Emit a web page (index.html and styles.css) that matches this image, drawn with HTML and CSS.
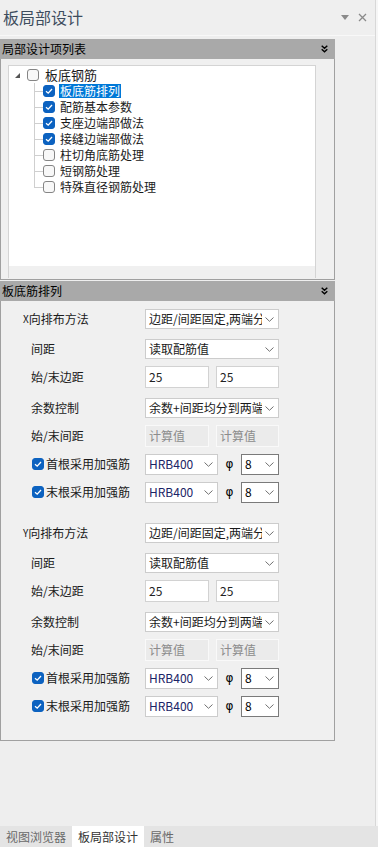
FILE: index.html
```html
<!DOCTYPE html>
<html lang="zh-CN">
<head>
  <meta charset="UTF-8">
  <title>板局部设计</title>
  <link rel="stylesheet" href="styles.css">
</head>
<body>
  <div class="frame">
    <div class="main">
      <div class="titlebar">
        <span class="title">板局部设计</span>
        <span class="title-tools">
          <svg width="8" height="5" viewBox="0 0 8 5"><path d="M0 0H8L4 5Z" fill="#8a8a8a"/></svg>
          <svg width="9" height="9" viewBox="0 0 9 9"><path d="M1 1L8 8M8 1L1 8" stroke="#8a8a8a" stroke-width="1.3"/></svg>
        </span>
      </div>

      <div class="content">
        <!-- 局部设计项列表 -->
        <div class="panel">
          <div class="panel-head">
            <span>局部设计项列表</span>
            <svg width="7" height="8" viewBox="0 0 7 8"><path d="M0.7 0.7L3.5 3.3L6.3 0.7M0.7 4.2L3.5 6.8L6.3 4.2" stroke="#000" stroke-width="1.4" fill="none"/></svg>
          </div>
          <div class="panel-body tree-body">
            <div class="tree">
              <div class="tree-list">
                <div class="node root">
                  <svg class="expander" width="5" height="5" viewBox="0 0 5 5"><path d="M5 0V5H0Z" fill="#555"/></svg>
                  <span class="cb"></span>
                  <span class="node-text">板底钢筋</span>
                </div>
                <div class="node child">
                  <span class="conn"></span>
                  <span class="cb on"><svg width="10" height="10" viewBox="0 0 10 10"><path d="M2 5.2L4.2 7.2L8 3" stroke="#fff" stroke-width="1.3" fill="none"/></svg></span>
                  <span class="node-text selected">板底筋排列</span>
                </div>
                <div class="node child">
                  <span class="conn"></span>
                  <span class="cb on"><svg width="10" height="10" viewBox="0 0 10 10"><path d="M2 5.2L4.2 7.2L8 3" stroke="#fff" stroke-width="1.3" fill="none"/></svg></span>
                  <span class="node-text">配筋基本参数</span>
                </div>
                <div class="node child">
                  <span class="conn"></span>
                  <span class="cb on"><svg width="10" height="10" viewBox="0 0 10 10"><path d="M2 5.2L4.2 7.2L8 3" stroke="#fff" stroke-width="1.3" fill="none"/></svg></span>
                  <span class="node-text">支座边端部做法</span>
                </div>
                <div class="node child">
                  <span class="conn"></span>
                  <span class="cb on"><svg width="10" height="10" viewBox="0 0 10 10"><path d="M2 5.2L4.2 7.2L8 3" stroke="#fff" stroke-width="1.3" fill="none"/></svg></span>
                  <span class="node-text">接缝边端部做法</span>
                </div>
                <div class="node child">
                  <span class="conn"></span>
                  <span class="cb"></span>
                  <span class="node-text">柱切角底筋处理</span>
                </div>
                <div class="node child">
                  <span class="conn"></span>
                  <span class="cb"></span>
                  <span class="node-text">短钢筋处理</span>
                </div>
                <div class="node child">
                  <span class="conn last"></span>
                  <span class="cb"></span>
                  <span class="node-text">特殊直径钢筋处理</span>
                </div>
              </div>
              <div class="tree-foot"></div>
            </div>
          </div>
        </div>

        <!-- 板底筋排列 -->
        <div class="panel">
          <div class="panel-head">
            <span>板底筋排列</span>
            <svg width="7" height="8" viewBox="0 0 7 8"><path d="M0.7 0.7L3.5 3.3L6.3 0.7M0.7 4.2L3.5 6.8L6.3 4.2" stroke="#000" stroke-width="1.4" fill="none"/></svg>
          </div>
          <div class="panel-body form-body">
            <div class="group">
              <div class="row first">
                <span class="lab"><span class="axis">X</span>向排布方法</span>
                <div class="dd wide"><span class="dd-text clip">边距/间距固定,两端分布</span><svg width="9" height="5" viewBox="0 0 9 5"><path d="M0.5 0.5L4.5 4.3L8.5 0.5" stroke="#707070" fill="none"/></svg></div>
              </div>
              <div class="row r2">
                <span class="lab">间距</span>
                <div class="dd wide"><span class="dd-text">读取配筋值</span><svg width="9" height="5" viewBox="0 0 9 5"><path d="M0.5 0.5L4.5 4.3L8.5 0.5" stroke="#707070" fill="none"/></svg></div>
              </div>
              <div class="row">
                <span class="lab">始/末边距</span>
                <div class="pair"><span class="box">25</span><span class="box">25</span></div>
              </div>
              <div class="row r4">
                <span class="lab">余数控制</span>
                <div class="dd wide"><span class="dd-text clip">余数+间距均分到两端</span><svg width="9" height="5" viewBox="0 0 9 5"><path d="M0.5 0.5L4.5 4.3L8.5 0.5" stroke="#707070" fill="none"/></svg></div>
              </div>
              <div class="row">
                <span class="lab">始/末间距</span>
                <div class="pair"><span class="box off">计算值</span><span class="box off">计算值</span></div>
              </div>
              <div class="row chk">
                <span class="lab"><span class="cb on"><svg width="10" height="10" viewBox="0 0 10 10"><path d="M2 5.2L4.2 7.2L8 3" stroke="#fff" stroke-width="1.3" fill="none"/></svg></span>首根采用加强筋</span>
                <div class="dd grade"><span class="dd-text">HRB400</span><svg width="9" height="5" viewBox="0 0 9 5"><path d="M0.5 0.5L4.5 4.3L8.5 0.5" stroke="#707070" fill="none"/></svg></div>
                <span class="phi">φ</span>
                <div class="dd dia"><span class="dd-text">8</span><svg width="9" height="5" viewBox="0 0 9 5"><path d="M0.5 0.5L4.5 4.3L8.5 0.5" stroke="#707070" fill="none"/></svg></div>
              </div>
              <div class="row chk">
                <span class="lab"><span class="cb on"><svg width="10" height="10" viewBox="0 0 10 10"><path d="M2 5.2L4.2 7.2L8 3" stroke="#fff" stroke-width="1.3" fill="none"/></svg></span>末根采用加强筋</span>
                <div class="dd grade"><span class="dd-text">HRB400</span><svg width="9" height="5" viewBox="0 0 9 5"><path d="M0.5 0.5L4.5 4.3L8.5 0.5" stroke="#707070" fill="none"/></svg></div>
                <span class="phi">φ</span>
                <div class="dd dia"><span class="dd-text">8</span><svg width="9" height="5" viewBox="0 0 9 5"><path d="M0.5 0.5L4.5 4.3L8.5 0.5" stroke="#707070" fill="none"/></svg></div>
              </div>
            </div>

            <div class="group second">
              <div class="row first">
                <span class="lab"><span class="axis">Y</span>向排布方法</span>
                <div class="dd wide"><span class="dd-text clip">边距/间距固定,两端分布</span><svg width="9" height="5" viewBox="0 0 9 5"><path d="M0.5 0.5L4.5 4.3L8.5 0.5" stroke="#707070" fill="none"/></svg></div>
              </div>
              <div class="row r2">
                <span class="lab">间距</span>
                <div class="dd wide"><span class="dd-text">读取配筋值</span><svg width="9" height="5" viewBox="0 0 9 5"><path d="M0.5 0.5L4.5 4.3L8.5 0.5" stroke="#707070" fill="none"/></svg></div>
              </div>
              <div class="row">
                <span class="lab">始/末边距</span>
                <div class="pair"><span class="box">25</span><span class="box">25</span></div>
              </div>
              <div class="row r4">
                <span class="lab">余数控制</span>
                <div class="dd wide"><span class="dd-text clip">余数+间距均分到两端</span><svg width="9" height="5" viewBox="0 0 9 5"><path d="M0.5 0.5L4.5 4.3L8.5 0.5" stroke="#707070" fill="none"/></svg></div>
              </div>
              <div class="row">
                <span class="lab">始/末间距</span>
                <div class="pair"><span class="box off">计算值</span><span class="box off">计算值</span></div>
              </div>
              <div class="row chk">
                <span class="lab"><span class="cb on"><svg width="10" height="10" viewBox="0 0 10 10"><path d="M2 5.2L4.2 7.2L8 3" stroke="#fff" stroke-width="1.3" fill="none"/></svg></span>首根采用加强筋</span>
                <div class="dd grade"><span class="dd-text">HRB400</span><svg width="9" height="5" viewBox="0 0 9 5"><path d="M0.5 0.5L4.5 4.3L8.5 0.5" stroke="#707070" fill="none"/></svg></div>
                <span class="phi">φ</span>
                <div class="dd dia"><span class="dd-text">8</span><svg width="9" height="5" viewBox="0 0 9 5"><path d="M0.5 0.5L4.5 4.3L8.5 0.5" stroke="#707070" fill="none"/></svg></div>
              </div>
              <div class="row chk">
                <span class="lab"><span class="cb on"><svg width="10" height="10" viewBox="0 0 10 10"><path d="M2 5.2L4.2 7.2L8 3" stroke="#fff" stroke-width="1.3" fill="none"/></svg></span>末根采用加强筋</span>
                <div class="dd grade"><span class="dd-text">HRB400</span><svg width="9" height="5" viewBox="0 0 9 5"><path d="M0.5 0.5L4.5 4.3L8.5 0.5" stroke="#707070" fill="none"/></svg></div>
                <span class="phi">φ</span>
                <div class="dd dia"><span class="dd-text">8</span><svg width="9" height="5" viewBox="0 0 9 5"><path d="M0.5 0.5L4.5 4.3L8.5 0.5" stroke="#707070" fill="none"/></svg></div>
              </div>
            </div>
          </div>
        </div>
      </div>
    </div>
    <div class="edge"></div>
  </div>

  <div class="tabs">
    <span class="tab">视图浏览器</span>
    <span class="tab on">板局部设计</span>
    <span class="tab">属性</span>
  </div>
</body>
</html>
```

FILE: styles.css
```css
html, body {
  margin: 0;
  padding: 0;
}
body {
  width: 378px;
  height: 847px;
  overflow: hidden;
  background: #eeeeee;
  font-family: "Noto Sans CJK SC", "Noto Sans", sans-serif;
  font-size: 12px;
  line-height: 1.2;
  color: #1a1a1a;
}
.frame {
  display: flex;
  height: 826px;
}
.main {
  flex: 1;
  display: flex;
  flex-direction: column;
  min-width: 0;
}
.edge {
  width: 3px;
  box-sizing: border-box;
  border-left: 1px solid #d8d8d8;
  background: #f6f6f6;
}

/* title bar */
.titlebar {
  height: 35px;
  border-bottom: 1px solid #f8f8f8;
  background: #efefef;
  display: flex;
  align-items: center;
  justify-content: space-between;
  padding: 0 8px 0 3px;
}
.title {
  font-size: 16px;
  color: #3e4d5e;
}
.title-tools {
  display: flex;
  align-items: center;
  gap: 9px;
}
.title-tools svg { display: block; }

/* panels */
.content { padding-top: 3px; }
.panel + .panel { margin-top: 1px; }
.panel-head {
  width: 335px;
  height: 20px;
  box-sizing: border-box;
  background: #a9a9a9;
  color: #000;
  display: flex;
  align-items: center;
  justify-content: space-between;
  padding: 0 7px 0 2px;
}
.panel-head svg { display: block; }
.panel-body {
  width: 335px;
  box-sizing: border-box;
  border: 1px solid #a0a0a0;
  border-top: none;
  background: #f0f0f0;
}
.tree-body {
  height: 221px;
  padding: 6px 0 0 7px;
}
.form-body {
  height: 440px;
  padding-top: 4px;
}

/* tree */
.tree {
  width: 308px;
  height: 213px;
  box-sizing: border-box;
  border: 1px solid #d4d4d4;
  border-bottom: none;
  background: #fff;
  display: flex;
  flex-direction: column;
}
.tree-list {
  flex: 1;
  padding-top: 1px;
}
.tree-foot {
  height: 12px;
  background: #f0f0f0;
}
.node {
  height: 16px;
  display: flex;
  align-items: center;
  white-space: nowrap;
}
.node.root { padding-left: 6px; }
.node.root .expander { margin-right: 7px; display: block; }
.node.root .node-text { margin-left: 6px; font-size: 13px; }
.node.child { padding-left: 25px; }
.node.child .node-text { margin-left: 4px; padding: 0 1px; line-height: 14px; }
.node-text.selected {
  background: #0078d7;
  color: #fff;
}
.conn {
  width: 9px;
  height: 16px;
  flex: none;
  background:
    linear-gradient(#cfcfcf, #cfcfcf) 0 0 / 1px 100% no-repeat,
    linear-gradient(#cfcfcf, #cfcfcf) 0 8px / 9px 1px no-repeat;
}
.conn.last {
  background-size: 1px 9px, 9px 1px;
}

/* checkbox */
.cb {
  width: 12px;
  height: 12px;
  flex: none;
  box-sizing: border-box;
  border: 1px solid #858585;
  border-radius: 3px;
  background: #f8f8f8;
  display: flex;
  align-items: center;
  justify-content: center;
}
.cb.on {
  background: #0c62c0;
  border-color: #0c62c0;
}
.cb svg { display: block; }

/* form rows */
.group.second { margin-top: 13px; }
.row {
  height: 28px;
  display: flex;
  align-items: center;
  padding-left: 30px;
  white-space: nowrap;
}
.row.r2 { margin-top: 2px; }
.row.r4 { margin-top: 3px; }
.lab {
  width: 114px;
  flex: none;
  display: flex;
  align-items: center;
}
.row.first { padding-left: 22px; }
.row.first .lab { width: 122px; }
.axis { font-size: 10px; }
.row.chk { padding-left: 31px; }
.row.chk .lab { width: 113px; gap: 2px; }

.dd {
  height: 20px;
  box-sizing: border-box;
  border: 1px solid #cccccc;
  background: #fff;
  display: flex;
  align-items: center;
  gap: 3px;
  padding: 0 4px 0 3px;
  flex: none;
}
.dd svg { display: block; flex: none; }
.dd-text {
  flex: 1;
  white-space: nowrap;
  line-height: 18px;
}
.dd-text.clip {
  overflow: hidden;
  min-width: 0;
}
.dd.wide { width: 134px; }
.dd.grade {
  width: 73px;
  height: 21px;
  color: #1b2466;
}
.dd.dia {
  width: 38px;
  height: 21px;
  border-color: #7a7a7a;
  color: #000;
}
.phi {
  width: 23px;
  text-align: center;
  font-family: "DejaVu Sans", sans-serif;
  font-size: 12px;
  color: #000;
}
.pair {
  display: flex;
  gap: 7px;
}
.box {
  width: 64px;
  height: 22px;
  box-sizing: border-box;
  border: 1px solid #d2d2d2;
  background: #fff;
  padding-left: 3px;
  display: flex;
  align-items: center;
  color: #222;
}
.box + .box { width: 63px; }
.box.off {
  background: #ebebeb;
  border-color: #f9f9f9;
  color: #8c8c8c;
}

/* bottom tabs */
.tabs {
  height: 21px;
  background: #e4e4e4;
  display: flex;
}
.tab {
  padding: 0 6px;
  line-height: 21px;
  color: #6a6a6a;
}
.tab.on {
  background: #fff;
  color: #333;
}
```
